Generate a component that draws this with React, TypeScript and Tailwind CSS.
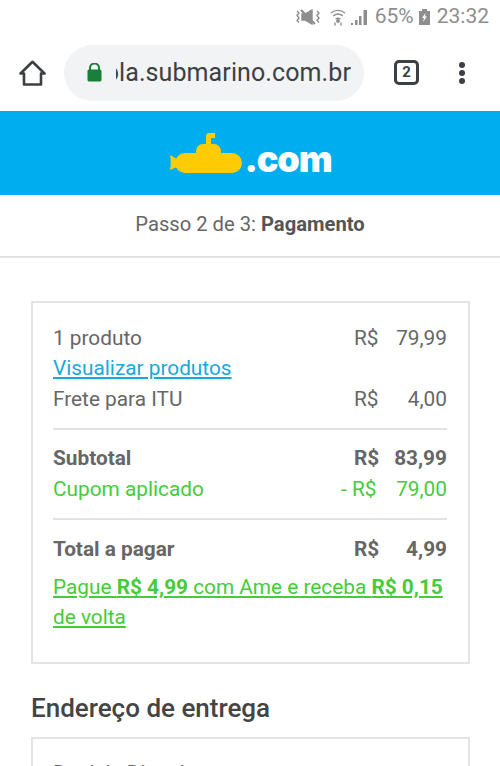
function Row({ label, value, className = "" }: { label: string; value: string; className?: string }) {
  return (
    <div className={`flex justify-between h-[30.5px] items-center ${className}`}>
      <span>{label}</span>
      <span className="flex justify-between w-[93px]">
        <span>R$</span>
        <span>{value}</span>
      </span>
    </div>
  );
}

function StatusBar() {
  return (
    <div className="h-[34px] flex items-center justify-end pr-[11px] text-[#8e8e8e] text-[21px]">
      <svg width="26" height="16" viewBox="0 0 26 16" fill="none" stroke="#8e8e8e" strokeWidth="1.4">
        <path d="M2 2l2 2-2 2.500 2 2.500-2 2.500 2 2" />
        <path d="M7 5h3l7-4v14l-7-4H7z" fill="#8e8e8e" />
        <path d="M6 1l14 14" strokeWidth="2.200" stroke="#8e8e8e" />
        <path d="M22 2l2 2-2 2.500 2 2.500-2 2.500 2 2" />
      </svg>
      <svg className="ml-[9px]" width="16" height="17" viewBox="0 0 16 17" fill="none" stroke="#8e8e8e" strokeWidth="1.400">
        <path d="M1 4c4-3.500 10-3.500 14 0M3.200 7c3-2.500 6.600-2.500 9.600 0M5.500 10c1.500-1 3.500-1 5 0" />
        <circle cx="8" cy="12" r="1.200" fill="#8e8e8e" />
        <path d="M5 13.500v3M11 13.500v3" />
      </svg>
      <svg className="ml-[5px]" width="17" height="15" viewBox="0 0 17 15" fill="#8e8e8e">
        <path d="M0 13h2v2H0zM4 10h2.500v5H4zM8 6h2.500v9H8zM12.500 0H16v15h-3.500z" />
      </svg>
      <span className="ml-[7px]">65%</span>
      <svg className="ml-[5px]" width="11" height="16" viewBox="0 0 11 16" fill="#8e8e8e">
        <path d="M3 0h5v2h3v14H0V2h3z" />
        <path d="M6.500 4L3 9h2l-1 4 4-5.500H6z" fill="#fff" />
      </svg>
      <span className="ml-[7px]">23:32</span>
    </div>
  );
}

function AddressBar() {
  return (
    <div className="h-[77px] flex items-center">
      <svg className="ml-[19px] shrink-0" width="27" height="26" viewBox="0 0 27 26" fill="none" stroke="#3c4043" strokeWidth="2.600" strokeLinejoin="round">
        <path d="M1.500 13.500L13.500 1.800l12 11.700h-3.500v11H5v-11z" />
      </svg>
      <div className="ml-[18px] w-[300px] h-[56px] rounded-full bg-[#f1f3f4] flex items-center shrink-0">
        <svg className="ml-[23px] shrink-0" width="15" height="19" viewBox="0 0 15 19" fill="#188038">
          <path d="M2 7V5a5.500 5.500 0 0 1 11 0v2h-2V5a3.500 3.500 0 0 0-7 0v2z" />
          <rect x="0.500" y="6.500" width="14" height="12" rx="1.500" />
        </svg>
        <div className="ml-[14px] w-[235px] overflow-hidden whitespace-nowrap text-[25px] text-[#3c4043] flex justify-end tracking-[0.1px]">
          <span>ola.submarino.com.br</span>
        </div>
      </div>
      <div className="ml-[30px] w-[25px] h-[25px] rounded-[5px] border-[3px] border-[#3c4043] flex items-center justify-center text-[15px] font-bold text-[#3c4043]">
        2
      </div>
      <div className="ml-[40px] flex flex-col gap-[2px]">
        <span className="w-[6px] h-[6px] rounded-full bg-[#3c4043]" />
        <span className="w-[6px] h-[6px] rounded-full bg-[#3c4043]" />
        <span className="w-[6px] h-[6px] rounded-full bg-[#3c4043]" />
      </div>
    </div>
  );
}

function Logo() {
  return (
    <div className="h-[84px] bg-[#00aeef] flex items-center justify-center">
      <div className="flex items-end">
        <svg width="73" height="40" viewBox="0 0 73 40" fill="#ffcb05">
          <rect x="6" y="20" width="67" height="20" rx="10" />
          <path d="M27 24v-6a7 7 0 0 1 7-7h11a7 7 0 0 1 7 7v6z" />
          <path d="M37 13V3a3 3 0 0 1 3-3h6v5h-4v8z" />
          <path d="M1 22l7 4v8l-7 3c1-5 1-10 0-15z" />
        </svg>
        <span className="ml-[3px] text-[36px] leading-[28px] font-black text-white font-['Inter',sans-serif] tracking-[-1.2px]">.com</span>
      </div>
    </div>
  );
}

export default function App() {
  return (
    <div className="w-[500px] h-[766px] overflow-hidden bg-white font-['Roboto',sans-serif]">
      <StatusBar />
      <AddressBar />
      <Logo />
      <div className="h-[63px] pb-[3px] flex items-center justify-center border-b-2 border-[#e2e2e2] text-[20.2px] text-[#666]">
        <span>
          Passo 2 de 3: <b className="font-bold text-[#555]">Pagamento</b>
        </span>
      </div>
      <div className="ml-[31px] w-[439px] mt-[43px] h-[363px] border-2 border-[#e4e4e4] pl-[20px] pr-[21px] pt-[20px] text-[20.8px] text-[#666]">
        <Row label="1 produto" value="79,99" />
        <div className="h-[30.5px] flex items-center text-[#1ba7dc] underline">Visualizar produtos</div>
        <Row label="Frete para ITU" value="4,00" />
        <div className="border-t-2 border-[#e2e2e2] mt-[13px] pt-[14px]">
          <Row label="Subtotal" value="83,99" className="font-bold" />
          <div className="flex justify-between h-[30.5px] items-center text-[#46cc3a]">
            <span>Cupom aplicado</span>
            <span className="flex justify-between w-[106px]">
              <span>- R$</span>
              <span>79,00</span>
            </span>
          </div>
        </div>
        <div className="border-t-2 border-[#e2e2e2] mt-[13px] pt-[15px]">
          <Row label="Total a pagar" value="4,99" className="font-bold" />
          <div className="mt-[7px] leading-[30px] text-[#46cc3a] underline">
            Pague <b className="font-bold">R$ 4,99</b> com Ame e receba <b className="font-bold">R$ 0,15</b> de volta
          </div>
        </div>
      </div>
      <h2 className="ml-[31px] mt-[28px] text-[26px] leading-[32px] font-medium text-[#444]">Endereço de entrega</h2>
      <div className="ml-[31px] w-[439px] mt-[13px] h-[100px] border-2 border-[#e4e4e4] pl-[20px] pr-[21px] pt-[19px] text-[20.8px] text-[#666]">
        Daniele Dias de
      </div>
    </div>
  );
}
